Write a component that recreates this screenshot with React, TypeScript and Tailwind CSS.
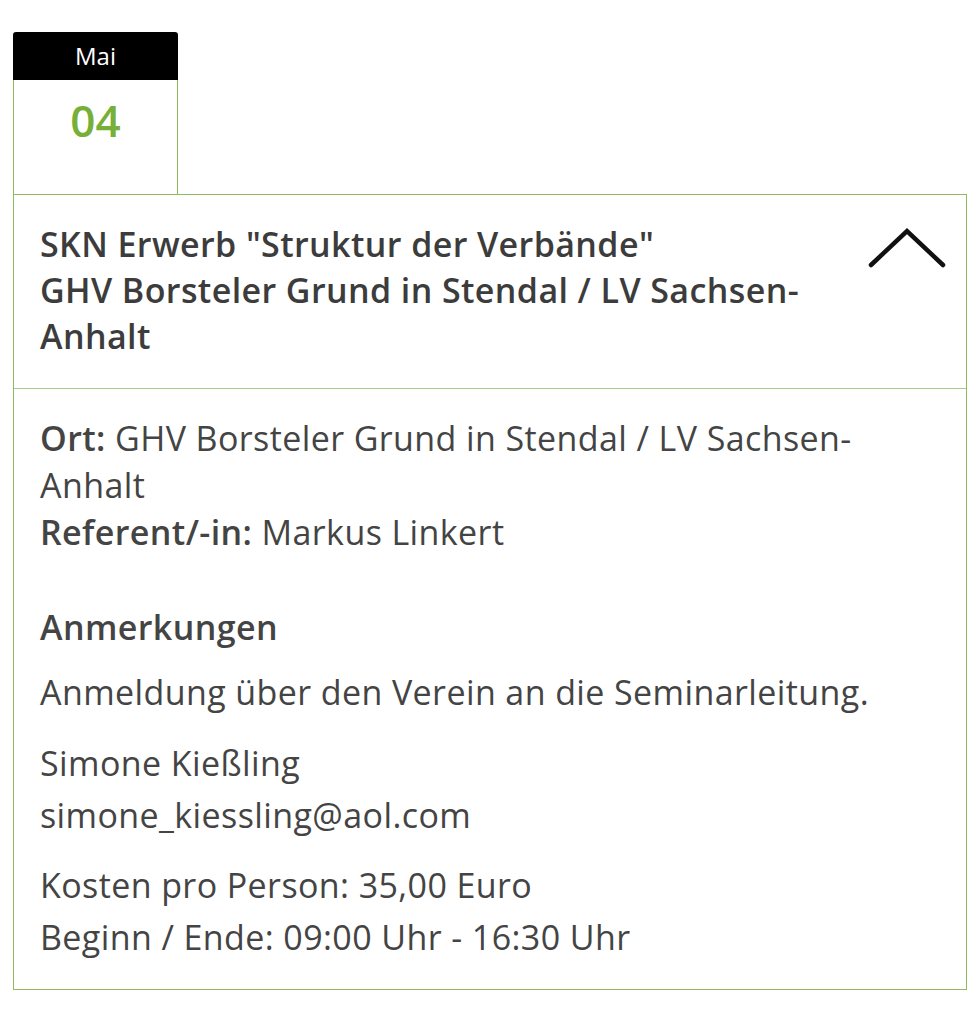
export default function App() {
  return (
    <div className="min-h-[1024px] bg-white pl-[13px] pr-[13px] pt-[32px] text-[#444]" style={{ fontFamily: '"Open Sans", "Noto Sans", sans-serif' }}>
      <div className="w-[165px]">
        <div className="flex h-[48px] items-center justify-center rounded-t-[3px] bg-black text-[24px] text-white">Mai</div>
        <div className="flex h-[114px] justify-center border-x-[1.5px] border-[#8fbb5e] pt-[10px]">
          <span className="text-[44px] font-semibold leading-[60px] text-[#76b039]">04</span>
        </div>
      </div>
      <div className="w-[954px] border-[1.5px] border-[#8fbb5e]">
        <div className="flex items-start justify-between border-b-[1.5px] border-[#a9c98a] pt-[26px] pb-[29px] pl-[26px] pr-[20px]">
          <h2 className="w-[790px] text-[34px] font-semibold leading-[46px] tracking-[0.4px] text-[#3c3c3c]">
            SKN Erwerb "Struktur der Verbände"
            <br />
            GHV Borsteler Grund in Stendal / LV Sachsen-Anhalt
          </h2>
          <svg className="mt-[5px]" width="78" height="44" viewBox="0 0 78 44" fill="none">
            <path d="M3 39 L39 5 L75 39" stroke="#111" strokeWidth="4.5" strokeLinecap="round" strokeLinejoin="miter" />
          </svg>
        </div>
        <div className="pt-[26px] pb-[26px] pl-[26px] pr-[20px] text-[34px] tracking-[0.4px]">
          <p className="w-[830px] leading-[47px]">
            <b className="font-semibold">Ort:</b> GHV Borsteler Grund in Stendal / LV Sachsen-Anhalt
            <br />
            <b className="font-semibold">Referent/-in:</b> Markus Linkert
          </p>
          <h3 className="mt-[48px] font-semibold leading-[47px]">Anmerkungen</h3>
          <p className="mt-[15px] leading-[52px]">Anmeldung über den Verein an die Seminarleitung.</p>
          <p className="mt-[19px] leading-[52px]">
            Simone Kießling
            <br />
            simone_kiessling@aol.com
          </p>
          <p className="mt-[18px] leading-[52px]">
            Kosten pro Person: 35,00 Euro
            <br />
            Beginn / Ende: 09:00 Uhr - 16:30 Uhr
          </p>
        </div>
      </div>
    </div>
  );
}
